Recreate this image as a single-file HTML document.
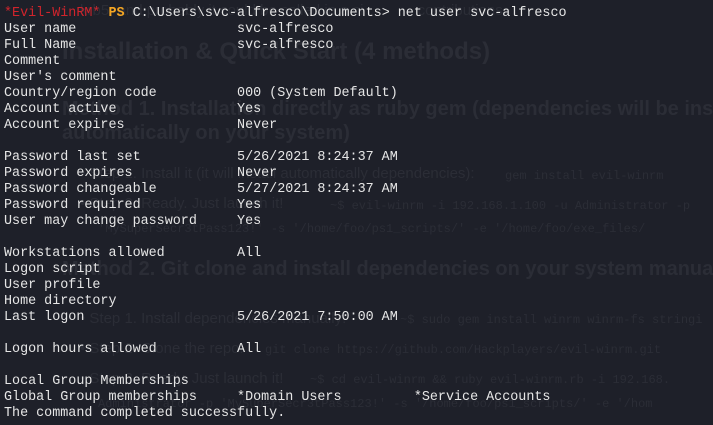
<!DOCTYPE html>
<html><head><meta charset="utf-8"><style>
html,body{margin:0;padding:0;width:713px;height:425px;overflow:hidden;background:#1e2029;}
.g{position:absolute;color:#2b2d36;font-family:"Liberation Sans",sans-serif;white-space:pre;}
.gm{position:absolute;color:#2b2d36;font-family:"Liberation Mono",monospace;white-space:pre;font-size:12px;}
.gb{font-weight:bold;}
pre{position:absolute;left:4px;top:6px;margin:0;font-family:"Liberation Mono","DejaVu Sans Mono",monospace;font-size:13.4px;line-height:16px;color:#e6e6e6;}
.r{color:#d0242c}.o{color:#f5a623;font-weight:bold}
</style></head><body>
<div class="g" style="left:80px;top:2px;font-size:15px;">krb5, and probably it could be called in a ci             contributions.</div>
<div class="g gb" style="left:62px;top:38px;font-size:24px;">Installation &amp; Quick Start (4 methods)</div>
<div class="g gb" style="left:62px;top:98px;font-size:20px;">Method 1. Installation directly as ruby gem (dependencies will be inst</div>
<div class="g gb" style="left:62px;top:122px;font-size:20px;">automatically on your system)</div>
<div class="g" style="left:80px;top:165px;font-size:15px;">• Step 1. Install it (it will install automatically dependencies):</div>
<div class="gm" style="left:505px;top:169px;">gem install evil-winrm</div>
<div class="g" style="left:80px;top:195px;font-size:15px;">• Step 2. Ready. Just launch it!</div>
<div class="gm" style="left:330px;top:199px;">~$ evil-winrm -i 192.168.1.100 -u Administrator -p</div>
<div class="gm" style="left:98px;top:222px;">'MySuperSecr3tPass123!' -s '/home/foo/ps1_scripts/' -e '/home/foo/exe_files/</div>
<div class="g gb" style="left:62px;top:258px;font-size:20px;">Method 2. Git clone and install dependencies on your system manual</div>
<div class="g" style="left:80px;top:310px;font-size:15px;">• Step 1. Install dependencies manually:</div>
<div class="gm" style="left:400px;top:313px;">~$ sudo gem install winrm winrm-fs stringi</div>
<div class="g" style="left:80px;top:340px;font-size:15px;">• Step 2. Clone the repo:</div>
<div class="gm" style="left:265px;top:343px;">git clone https://github.com/Hackplayers/evil-winrm.git</div>
<div class="g" style="left:80px;top:370px;font-size:15px;">• Step 3. Ready. Just launch it!</div>
<div class="gm" style="left:310px;top:373px;">~$ cd evil-winrm &amp;&amp; ruby evil-winrm.rb -i 192.168.</div>
<div class="gm" style="left:98px;top:397px;">Administrator -p 'MySuperSecr3tPass123!' -s '/home/foo/ps1_scripts/' -e '/hom</div>
<pre><span class="r">*Evil-WinRM*</span> <span class="o">PS</span> C:\Users\svc-alfresco\Documents&gt; net user svc-alfresco
User name                    svc-alfresco
Full Name                    svc-alfresco
Comment
User's comment
Country/region code          000 (System Default)
Account active               Yes
Account expires              Never

Password last set            5/26/2021 8:24:37 AM
Password expires             Never
Password changeable          5/27/2021 8:24:37 AM
Password required            Yes
User may change password     Yes

Workstations allowed         All
Logon script
User profile
Home directory
Last logon                   5/26/2021 7:50:00 AM

Logon hours allowed          All

Local Group Memberships
Global Group memberships     *Domain Users         *Service Accounts
The command completed successfully.</pre>
</body></html>
